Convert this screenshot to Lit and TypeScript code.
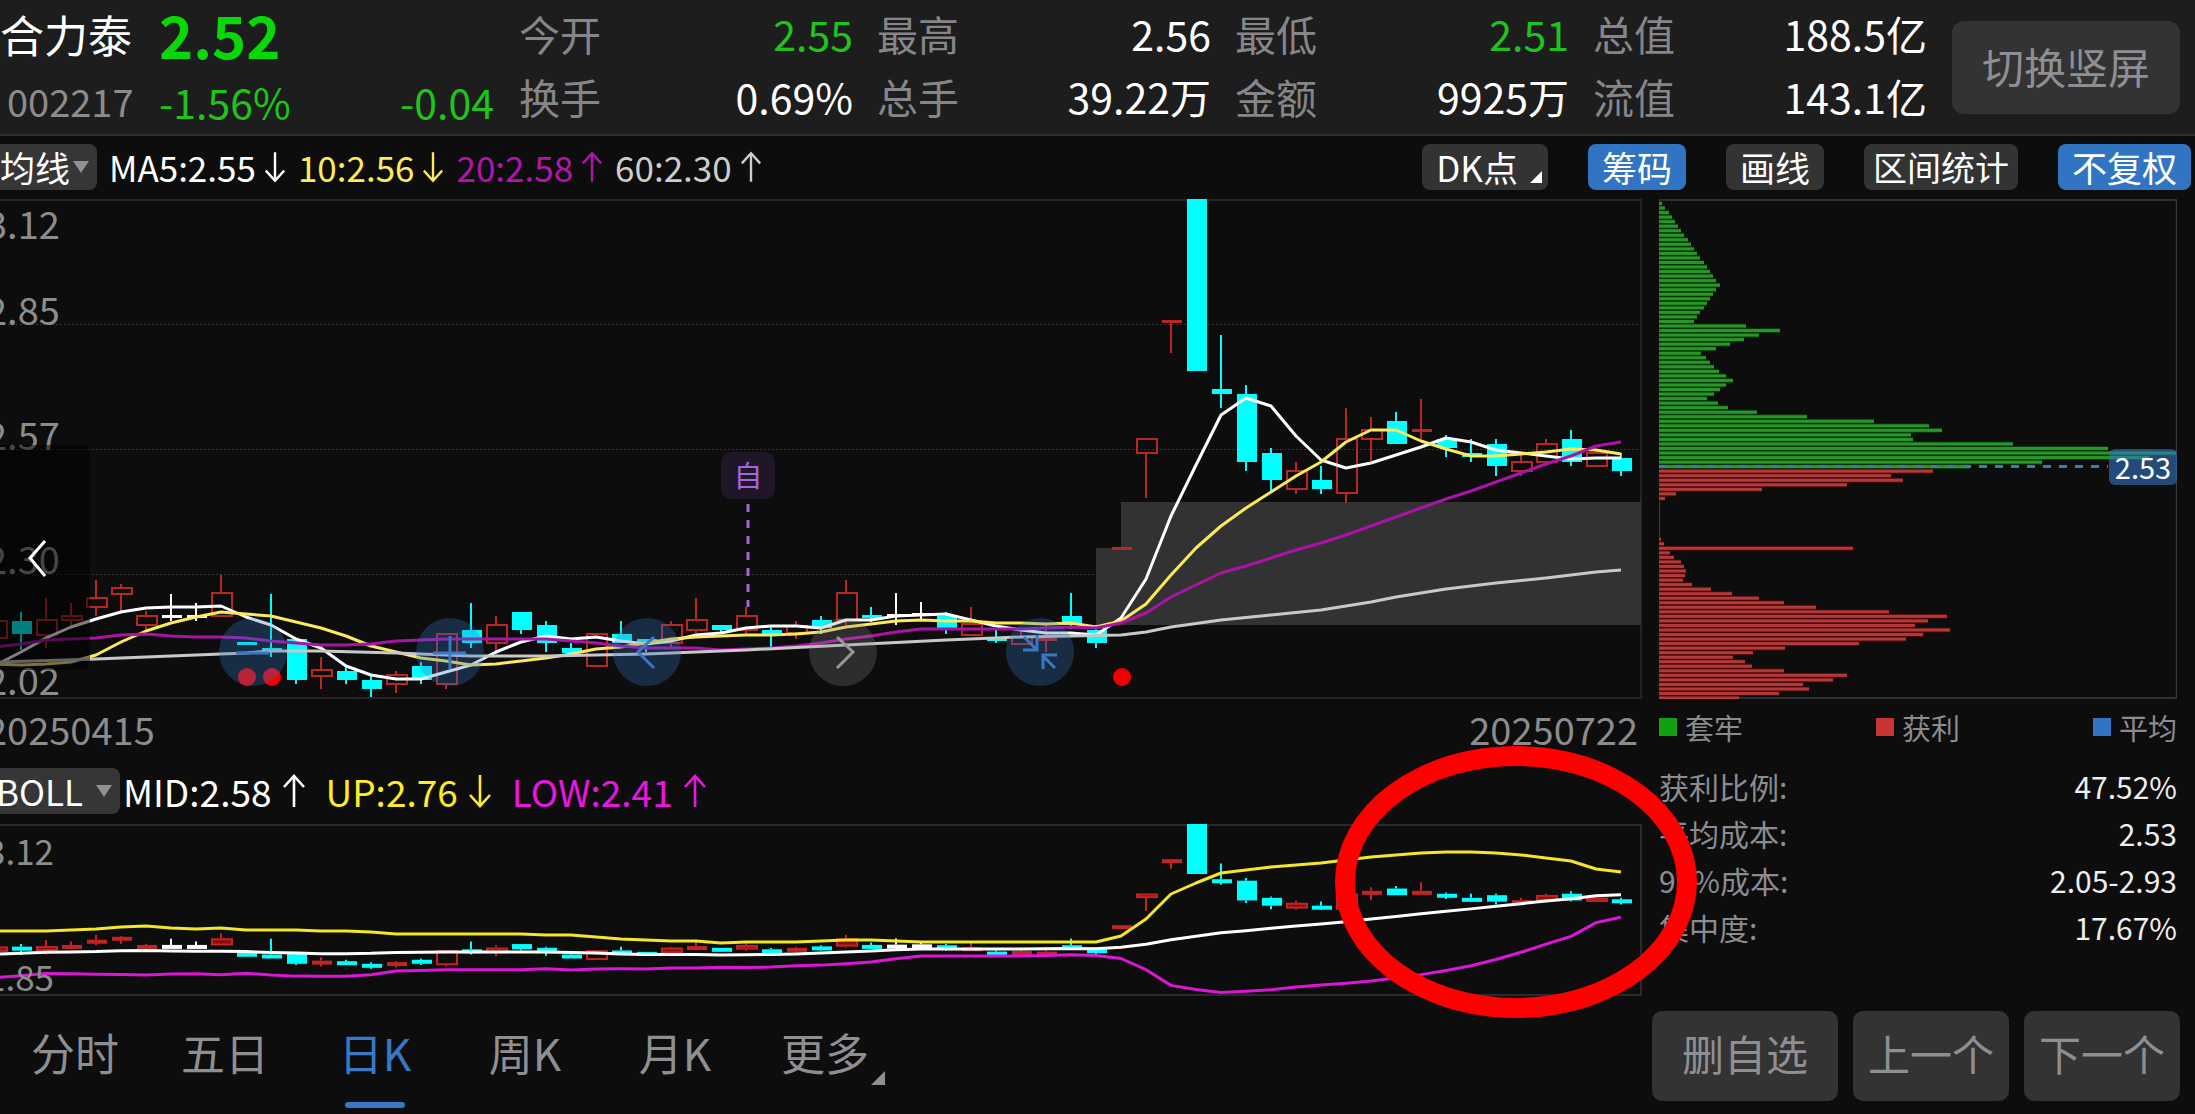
import { LitElement, html, svg, css } from "lit";
import { customElement, state } from "lit/decorators.js";

type Kind = "r" | "c" | "w";
// [kind, high, body top, body bottom, low] on the vertical axis of the main plot
type Candle = [Kind, number, number, number, number];

const CANDLES: Candle[] = [
  ["r", 420, 421, 440, 440], ["c", 413, 422, 435, 451], ["r", 399, 420, 437, 449], ["r", 404, 416, 422, 430],
  ["r", 381, 398, 409, 417], ["r", 385, 388, 396, 412], ["r", 412, 416, 427, 430], ["w", 395, 416, 419, 422],
  ["w", 404, 416, 419, 422], ["r", 376, 393, 418, 418], ["c", 443, 443, 446, 446], ["c", 395, 449, 451, 458],
  ["c", 440, 440, 481, 485], ["r", 458, 470, 478, 490], ["c", 467, 472, 481, 485], ["c", 476, 481, 490, 498],
  ["r", 472, 475, 486, 494], ["c", 463, 467, 481, 485], ["r", 434, 434, 486, 490], ["c", 404, 431, 444, 449],
  ["r", 417, 425, 445, 455], ["c", 413, 413, 431, 435], ["c", 422, 426, 444, 453], ["c", 444, 449, 454, 457],
  ["r", 434, 434, 468, 468], ["c", 422, 435, 444, 444], ["c", 440, 440, 445, 453], ["r", 422, 425, 445, 449],
  ["r", 399, 420, 432, 434], ["c", 426, 426, 431, 433], ["r", 408, 416, 432, 436], ["c", 427, 431, 435, 448],
  ["r", 422, 426, 435, 440], ["c", 417, 421, 429, 435], ["r", 381, 393, 422, 426], ["c", 408, 416, 419, 423],
  ["w", 394, 415, 418, 426], ["w", 403, 414, 417, 420], ["c", 413, 417, 429, 435], ["r", 408, 424, 437, 437],
  ["c", 431, 439, 441, 444], ["r", 432, 437, 446, 446], ["r", 426, 439, 441, 453], ["c", 394, 417, 426, 430],
  ["c", 426, 431, 444, 449], ["r", 348, 348, 350, 350], ["r", 239, 239, 255, 299], ["r", 121, 121, 123, 154],
  ["c", 0, 0, 172, 172], ["c", 136, 190, 195, 209], ["c", 186, 195, 263, 272], ["c", 249, 254, 281, 293],
  ["r", 263, 271, 291, 295], ["c", 267, 281, 290, 295], ["r", 209, 239, 295, 304], ["r", 218, 230, 241, 262],
  ["c", 213, 222, 245, 245], ["r", 200, 230, 232, 240], ["c", 236, 240, 249, 258], ["c", 240, 254, 258, 263],
  ["c", 240, 245, 267, 277], ["r", 254, 262, 273, 277], ["r", 240, 244, 264, 267], ["c", 231, 240, 263, 267],
  ["r", 252, 253, 268, 268], ["c", 254, 259, 272, 277],
];
const FIRST_X = -4;
const STEP = 25;

const MA5 = [466, 453, 439, 428, 420, 413, 409, 408, 408, 407, 418, 426, 440, 449, 467, 476, 480, 480, 473, 466, 453,
  443, 437, 440, 438, 442, 445, 442, 436, 434, 429, 427, 427, 429, 421, 421, 417, 416, 415, 421, 427, 431, 434, 434,
  436, 419, 380, 317, 266, 216, 199, 207, 237, 261, 269, 264, 256, 248, 239, 243, 251, 254, 257, 260, 259, 259];
const MA10 = [465, 466, 465, 463, 456, 443, 432, 424, 418, 413, 415, 417, 423, 429, 437, 447, 453, 459, 462, 466, 465,
  462, 459, 455, 450, 448, 444, 440, 438, 437, 436, 436, 435, 433, 428, 425, 422, 421, 422, 422, 424, 424, 425, 424,
  428, 422, 405, 376, 349, 327, 309, 293, 277, 263, 243, 231, 231, 242, 250, 257, 257, 255, 253, 250, 251, 255];
const MA20 = [448, 445, 441, 440, 439, 436, 435, 437, 438, 438, 439, 442, 444, 446, 446, 445, 442, 441, 440, 440, 440,
  440, 440, 442, 444, 447, 449, 449, 449, 451, 450, 449, 447, 444, 440, 437, 433, 430, 430, 430, 430, 430, 429, 428,
  429, 424, 414, 398, 386, 374, 367, 359, 351, 344, 336, 327, 318, 309, 300, 292, 283, 274, 265, 257, 247, 243];
const MA60: [number, number][] = [[-4, 463], [96, 460], [196, 456], [246, 454], [271, 452], [321, 452], [396, 454],
  [471, 457], [546, 457], [646, 455], [746, 451], [846, 446], [946, 441], [1021, 438], [1071, 437], [1121, 436],
  [1146, 433], [1171, 428], [1221, 421], [1271, 416], [1321, 411], [1346, 407], [1371, 403], [1396, 398],
  [1446, 390], [1496, 384], [1546, 379], [1596, 373], [1621, 371]];

// Upper Bollinger band; the lower band mirrors it around MA20
const UPPER = [107, 107, 107, 106, 105, 103, 102, 104, 105, 104, 106, 106, 106, 107, 107, 108, 110, 110, 110, 110, 110,
  110, 111, 111, 113, 115, 116, 117, 117, 119, 118, 118, 118, 117, 116, 116, 117, 118, 118, 118, 118, 118, 118, 118,
  118, 112, 95, 70, 59, 49, 46, 43, 41, 39, 36, 33, 31, 29, 28, 28, 29, 31, 34, 37, 45, 48];
const SUB = 172 / 500 * 0.845;

const CHIPS_GREEN = [3, 6, 10, 13, 16, 19, 22, 25, 29, 32, 35, 38, 41, 45, 48, 51, 54, 57, 61, 57, 54, 51, 48, 45, 41,
  38, 35, 87, 121, 100, 85, 71, 57, 42, 47, 51, 55, 60, 67, 74, 67, 61, 55, 48, 59, 69, 98, 148, 215, 270, 283, 252,
  254, 354, 449, 517, 490, 383, 310];
const CHIPS_RED_HIGH = [274, 232, 244, 188, 103, 17, 6];
const CHIPS_RED_LOW = [2, 5, 194, 11, 15, 22, 25, 27, 26, 24, 33, 52, 73, 100, 125, 157, 230, 288, 269, 256, 291, 264,
  247, 200, 126, 94, 74, 86, 93, 125, 188, 174, 144, 150, 120, 80];
const CHIP_STEP = 4.537;

const QUOTE = [
  { label: "今开", value: "2.55", down: true }, { label: "最高", value: "2.56" },
  { label: "最低", value: "2.51", down: true }, { label: "总值", value: "188.5亿" },
  { label: "换手", value: "0.69%" }, { label: "总手", value: "39.22万" },
  { label: "金额", value: "9925万" }, { label: "流值", value: "143.1亿" },
];
const STATS = [["获利比例:", "47.52%"], ["平均成本:", "2.53"], ["90%成本:", "2.05-2.93"], ["集中度:", "17.67%"]];
const PERIODS = ["分时", "五日", "日K", "周K", "月K", "更多"];

const series = (ys: number[]) => ys.map((y, i) => `${FIRST_X + i * STEP},${y}`).join(" ");
const COLOR = { r: "#b72825", c: "#00ffff", w: "#ffffff" };

const candle = ([kind, hi, top, bottom, lo]: Candle, i: number, k = 1) => {
  const x = FIRST_X + i * STEP;
  const y = (v: number) => v * k;
  const compact = k !== 1;
  const color = compact && kind === "r" ? "#c22424" : COLOR[kind];
  const h = Math.max(y(bottom) - y(top), compact ? 4 : 3);
  const hollow = kind === "r" && h > 4;
  const inner = compact && h < 9 ? "#8c0a0a" : "none";
  return svg`
    <path d="M${x} ${y(hi)}V${y(top)}M${x} ${y(bottom)}V${y(lo)}" stroke=${color} stroke-width="2" fill="none"/>
    ${hollow
      ? svg`<rect x=${x - 9} y=${y(top) + 1} width="20" height=${h - 2} fill=${inner} stroke=${color} stroke-width="2"/>`
      : svg`<rect x=${x - 9} y=${y(top)} width="20" height=${h} fill=${color}/>`}`;
};

const chipBars = (lengths: number[], start: number, bright: string, dark: string) =>
  lengths.map((w, i) => {
    const y = 3 + (start + i) * CHIP_STEP;
    return svg`<rect x="0" y=${y - 1} width=${w} height="5" fill=${dark}/>
      <rect x="0" y=${y} width=${w} height="3" fill=${bright}/>`;
  });

const arrow = (up: boolean) => html`
  <svg class="arrow" viewBox="0 0 24 34" aria-hidden="true">
    <path d=${up ? "M12 33V2M2 13L12 2L22 13" : "M12 1V32M2 21L12 32L22 21"}
      fill="none" stroke="currentColor" stroke-width="2.6"/>
  </svg>`;

const icon = (d: string) => html`
  <svg class="icon" viewBox="0 0 68 68" aria-hidden="true">
    <path d=${d} fill="none" stroke="currentColor" stroke-width="3"/>
  </svg>`;

@customElement("app-root")
export class AppRoot extends LitElement {
  @state() private period = "日K";

  static styles = css`
    :host {
      display: flex;
      flex-direction: column;
      min-height: 100vh;
      box-sizing: border-box;
      overflow: hidden;
      background: #0d0d0d;
      color: #fff;
      font-family: "Noto Sans CJK SC", "Noto Sans", sans-serif;
    }
    * { box-sizing: border-box; }
    button {
      border: 0;
      padding: 0;
      font: inherit;
      color: inherit;
      background: none;
      cursor: pointer;
      white-space: nowrap;
    }
    svg { display: block; }
    .down { color: #1ec31e; }

    .header {
      display: flex;
      align-items: center;
      height: 136px;
      padding-right: 15px;
      background: #1d1d1d;
      border-bottom: 2px solid #2e2e2e;
      white-space: nowrap;
    }
    .stock {
      display: grid;
      grid-template-columns: 159px 335px;
      grid-template-rows: 68px 66px;
      align-items: center;
      margin: 0;
      font-weight: 400;
    }
    .name { font-size: 44px; line-height: 60px; }
    .price { font-size: 58px; line-height: 64px; font-weight: 700; color: #08d808; }
    .code { padding-left: 7px; font-size: 38px; line-height: 56px; color: #8c8c8c; }
    .change { display: flex; justify-content: space-between; font-size: 41px; line-height: 56px; }
    .quote {
      flex: 1;
      display: grid;
      grid-template-columns: repeat(4, 1fr);
      grid-auto-rows: 63px;
      column-gap: 24px;
      margin: 0 25px;
      padding-bottom: 4px;
      font-size: 41px;
      line-height: 63px;
    }
    .pair { display: flex; justify-content: space-between; }
    .pair dt { color: #86868a; }
    .pair dd { margin: 0; }
    .rotate {
      width: 228px;
      height: 93px;
      padding-bottom: 4px;
      border-radius: 12px;
      background: #333;
      color: #8f8f93;
      font-size: 42px;
    }

    .toolbar {
      display: flex;
      align-items: center;
      height: 63px;
      padding: 0 4px 1px 0;
      font-size: 35px;
      line-height: 46px;
    }
    .picker {
      display: flex;
      align-items: center;
      height: 46px;
      gap: 3px;
      padding-right: 8px;
      border-radius: 0 8px 8px 0;
      background: #363636;
    }
    .picker::after {
      content: "";
      border: 8px solid transparent;
      border-top: 12px solid #909095;
      border-bottom: 0;
    }
    .boll .picker { margin-left: -4px; gap: 13px; }
    .values { display: flex; gap: 12px; margin-left: 12px; }
    .value { display: flex; align-items: center; gap: 8px; white-space: nowrap; }
    .arrow { width: 22px; height: 32px; }
    .white { color: #fff; }
    .yellow { color: #fbe95e; }
    .purple { color: #b016ac; }
    .silver { color: #ccc; }
    .tools { display: flex; gap: 40px; margin-left: auto; }
    .tool {
      position: relative;
      height: 46px;
      padding: 0 14px;
      border-radius: 8px;
      background: #333;
      line-height: 46px;
    }
    .tool.wide { padding: 0 9px; font-size: 34px; }
    .tool.on { background: #3174c2; }
    .tool.menu { padding-right: 30px; }
    .tool.menu::after {
      content: "";
      position: absolute;
      right: 6px;
      bottom: 7px;
      border-left: 12px solid transparent;
      border-bottom: 12px solid #fff;
    }

    .body {
      flex: 1;
      display: grid;
      grid-template-columns: minmax(0, 1642fr) minmax(0, 518fr);
      column-gap: 17px;
      padding-right: 18px;
    }
    .plot { position: relative; height: 500px; }
    .plot svg.canvas { width: 100%; height: 100%; }
    .plot.sub { height: 172px; }
    .axis {
      position: absolute;
      inset: 0;
      display: grid;
      grid-template-rows: 40px 86px 125px 124px 121px;
      align-items: end;
      justify-items: start;
      margin-left: -14px;
      color: #8c8c8c;
      font-size: 38px;
      line-height: 32px;
    }
    .sub .axis { grid-template-rows: 42px 126px; font-size: 35px; }
    .pager {
      position: absolute;
      left: 0;
      top: 246px;
      width: 90px;
      height: 225px;
      border-radius: 0 8px 8px 0;
      background: rgba(0, 0, 0, 0.5);
    }
    .pager svg { width: 90px; height: 225px; }
    .controls {
      position: absolute;
      left: 219px;
      right: 568px;
      bottom: 13px;
      display: flex;
      justify-content: space-between;
    }
    .round {
      width: 68px;
      height: 68px;
      border-radius: 50%;
      background: rgba(49, 116, 194, 0.3);
      color: #3878c4;
    }
    .round.muted { background: rgba(140, 140, 140, 0.26); color: #97979b; }
    .icon { width: 68px; height: 68px; }
    .marker {
      position: absolute;
      left: 721px;
      top: 253px;
      width: 54px;
      height: 47px;
      border-radius: 10px;
      background: #1f1628;
      color: #a566dc;
      font-size: 29px;
      line-height: 45px;
      text-align: center;
    }
    .dates {
      display: flex;
      justify-content: space-between;
      margin-left: -14px;
      padding-right: 4px;
      height: 69px;
      color: #8c8c8c;
      font-size: 38px;
      line-height: 59px;
    }
    .boll { display: flex; align-items: center; height: 56px; padding-bottom: 10px; font-size: 37px; line-height: 46px; }
    .boll .picker { font-size: 35px; }
    .boll .values { gap: 20px; margin-left: 3px; }
    .boll .value { gap: 10px; }
    .boll .arrow { width: 24px; height: 34px; }
    .boll .yellow { color: #fbee28; }
    .boll .magenta { color: #ea16e0; }

    .chips { position: relative; height: 500px; }
    .chips svg { width: 100%; height: 100%; }
    .tag {
      position: absolute;
      right: 0;
      top: 250px;
      width: 68px;
      height: 36px;
      border-radius: 6px;
      background: rgba(49, 116, 194, 0.6);
      font-size: 29px;
      line-height: 34px;
      text-align: center;
    }
    .legend {
      display: flex;
      justify-content: space-between;
      color: #8c8c90;
      font-size: 29px;
      line-height: 56px;
    }
    .legend span { display: flex; align-items: center; gap: 8px; }
    .legend span::before { content: ""; width: 18px; height: 18px; background: var(--swatch); }
    .g { --swatch: #12a012; }
    .r { --swatch: #cb3434; }
    .b { --swatch: #3174c2; }
    .stats { width: 100%; margin-top: 8px; border-collapse: collapse; font-size: 30px; line-height: 47px; }
    .stats th { padding: 0; text-align: left; font-weight: 400; color: #8c8c90; }
    .stats td { padding: 0; text-align: right; color: #eee; }

    .footer {
      display: flex;
      align-items: flex-start;
      justify-content: space-between;
      height: 103px;
      padding-right: 15px;
      font-size: 42px;
      color: #8f8f93;
    }
    .tabs { display: grid; grid-template-columns: repeat(6, 150px); font-size: 44px; }
    .tab { position: relative; height: 98px; padding-bottom: 16px; line-height: 82px; }
    .tab.on { color: #3878c4; }
    .tab.on::after {
      content: "";
      position: absolute;
      left: 45px;
      bottom: 1px;
      width: 60px;
      height: 6px;
      border-radius: 3px;
      background: #3878c4;
    }
    .tab.more::after {
      content: "";
      position: absolute;
      right: 15px;
      bottom: 24px;
      border-left: 14px solid transparent;
      border-bottom: 14px solid #8f8f93;
    }
    .actions { display: flex; gap: 15px; }
    .action { height: 90px; min-width: 156px; padding-bottom: 8px; border-radius: 10px; background: #333; }
    .action.wide { min-width: 186px; }

    .charts { position: relative; min-width: 0; }
    .ring {
      position: absolute;
      left: 1335px;
      top: 547px;
      width: 362px;
      height: 272px;
      border: 20px solid #f00;
      border-radius: 50%;
      pointer-events: none;
      z-index: 1;
    }
  `;

  private mainPlot() {
    return html`
      <div class="plot">
        <svg class="canvas" viewBox="0 0 1642 500" preserveAspectRatio="none" role="img" aria-label="日K">
          <path d="M0 125.5H1641M0 250.5H1641M0 375.5H1641" stroke="#333" stroke-dasharray="2 2"/>
          <path d="M0 1H1641V499H0" fill="none" stroke="#242424" stroke-width="2"/>
          <path d="M1096 349H1121V303H1641V426H1096Z" fill="#323232"/>
          ${CANDLES.map((c, i) => candle(c, i))}
          <g fill="none" stroke-width="3" stroke-linejoin="round">
            <polyline points=${series(MA5)} stroke="#fff"/>
            <polyline points=${series(MA10)} stroke="#fbe95e"/>
            <polyline points=${series(MA20)} stroke="#aa14a6"/>
            <polyline points=${MA60.map((p) => p.join()).join(" ")} stroke="#c8c8c8"/>
          </g>
          <path d="M748 305V408" stroke="#a566dc" stroke-width="3" stroke-dasharray="8 8"/>
          <g fill="#f00000">
            <circle cx="247" cy="478" r="9"/><circle cx="272" cy="478" r="9"/><circle cx="1122" cy="478" r="9"/>
          </g>
        </svg>
        <div class="axis"><span>3.12</span><span>2.85</span><span>2.57</span><span>2.30</span><span>2.02</span></div>
        <span class="marker">自</span>
        <button class="pager" aria-label="上一页">
          <svg viewBox="0 0 90 225" aria-hidden="true">
            <path d="M45 96L30 113L45 131" fill="none" stroke="#fff" stroke-width="3"/>
          </svg>
        </button>
        <div class="controls">
          <button class="round" aria-label="缩小">${icon("M17 35H50")}</button>
          <button class="round" aria-label="放大">${icon("M17 35H50M34 18V51")}</button>
          <button class="round" aria-label="左移">${icon("M41 19L25 34L41 50")}</button>
          <button class="round muted" aria-label="右移">${icon("M28 19L44 34L28 50")}</button>
          <button class="round" aria-label="收起">
            ${icon("M18 19L31 32M31 17V32H17M49 50L37 38M37 51V37H51")}
          </button>
        </div>
      </div>`;
  }

  private bollPlot() {
    const mid = MA20.map((y) => y * SUB);
    const lower = mid.map((y, i) => 2 * y - UPPER[i]);
    return html`
      <div class="plot sub">
        <svg class="canvas" viewBox="0 0 1642 172" preserveAspectRatio="none" role="img" aria-label="BOLL">
          <path d="M0 1H1641V171H0" fill="none" stroke="#2a2a2a" stroke-width="2"/>
          ${CANDLES.map((c, i) => candle(c, i, SUB))}
          <g fill="none" stroke-width="3" stroke-linejoin="round">
            <polyline points=${series(mid)} stroke="#fff"/>
            <polyline points=${series(UPPER)} stroke="#f4e628"/>
            <polyline points=${series(lower)} stroke="#dc16d6"/>
          </g>
        </svg>
        <div class="axis"><span>3.12</span><span>1.85</span></div>
      </div>`;
  }

  render() {
    return html`
      <header class="header">
        <h1 class="stock">
          <span class="name">合力泰</span><span class="price">2.52</span>
          <span class="code">002217</span>
          <span class="change down"><span>-1.56%</span><span>-0.04</span></span>
        </h1>
        <dl class="quote">
          ${QUOTE.map((q) => html`
            <div class="pair"><dt>${q.label}</dt><dd class=${q.down ? "down" : ""}>${q.value}</dd></div>`)}
        </dl>
        <button class="rotate">切换竖屏</button>
      </header>

      <div class="toolbar">
        <button class="picker">均线</button>
        <div class="values">
          <span class="value white">MA5:2.55${arrow(false)}</span>
          <span class="value yellow">10:2.56${arrow(false)}</span>
          <span class="value purple">20:2.58${arrow(true)}</span>
          <span class="value silver">60:2.30${arrow(true)}</span>
        </div>
        <div class="tools">
          <button class="tool menu">DK点</button>
          <button class="tool on">筹码</button>
          <button class="tool">画线</button>
          <button class="tool wide">区间统计</button>
          <button class="tool on">不复权</button>
        </div>
      </div>

      <main class="body">
        <section class="charts">
          ${this.mainPlot()}
          <div class="dates"><span>20250415</span><span>20250722</span></div>
          <div class="boll">
            <button class="picker">BOLL</button>
            <div class="values">
              <span class="value white">MID:2.58${arrow(true)}</span>
              <span class="value yellow">UP:2.76${arrow(false)}</span>
              <span class="value magenta">LOW:2.41${arrow(true)}</span>
            </div>
          </div>
          ${this.bollPlot()}
          <div class="ring"></div>
        </section>

        <aside>
          <div class="chips">
            <svg viewBox="0 0 518 500" preserveAspectRatio="none" role="img" aria-label="筹码">
              <rect x="0.5" y="1" width="517" height="498" fill="none" stroke="#3a3a3a" stroke-width="1.5"/>
              ${chipBars(CHIPS_GREEN, 0, "#2a962a", "#063a06")}
              ${chipBars(CHIPS_RED_HIGH, 59, "#b23a3a", "#4c0808")}
              ${chipBars(CHIPS_RED_LOW, 74, "#b23a3a", "#4c0808")}
              <path d="M0 267.5H449" stroke="#4676b8" stroke-width="3" stroke-dasharray="8 8"/>
            </svg>
            <span class="tag">2.53</span>
          </div>
          <div class="legend"><span class="g">套牢</span><span class="r">获利</span><span class="b">平均</span></div>
          <table class="stats">
            ${STATS.map(([k, v]) => html`<tr><th scope="row">${k}</th><td>${v}</td></tr>`)}
          </table>
        </aside>
      </main>

      <footer class="footer">
        <nav class="tabs">
          ${PERIODS.map((p) => html`
            <button class="tab ${p === this.period ? "on" : ""} ${p === "更多" ? "more" : ""}"
              @click=${() => { this.period = p; }}>${p}</button>`)}
        </nav>
        <div class="actions">
          <button class="action wide">删自选</button>
          <button class="action">上一个</button>
          <button class="action">下一个</button>
        </div>
      </footer>
    `;
  }
}
